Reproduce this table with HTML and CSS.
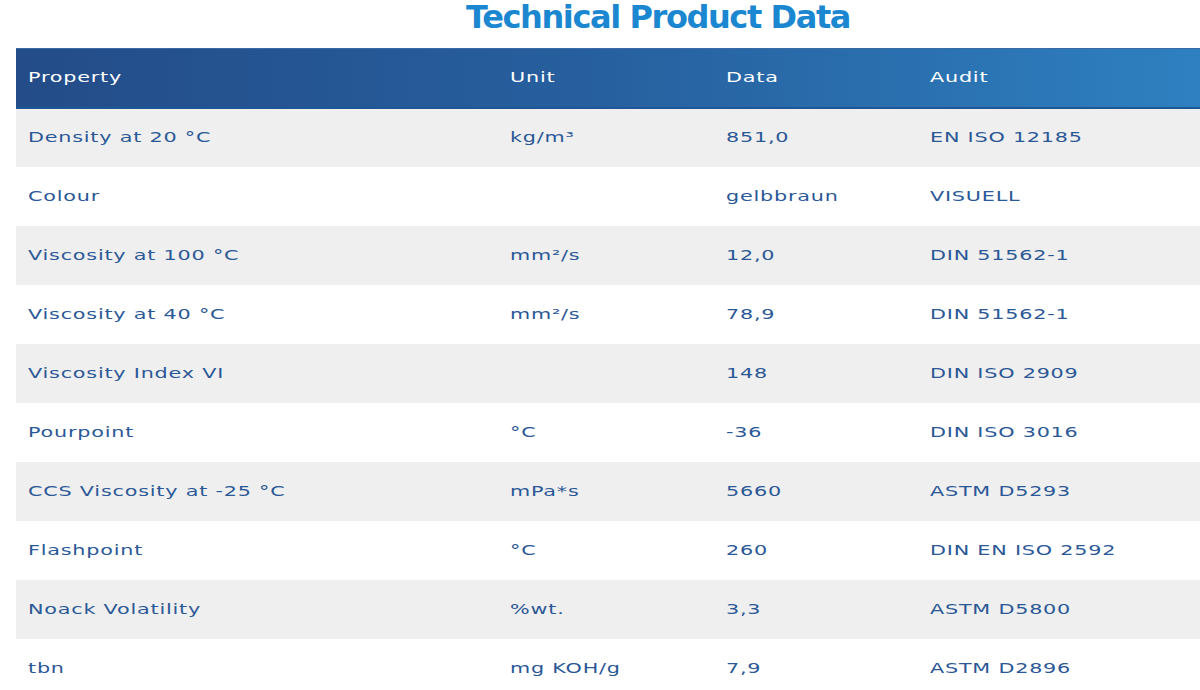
FILE: index.html
```html
<!DOCTYPE html>
<html lang="en">
<head>
<meta charset="utf-8">
<title>Technical Product Data</title>
<link rel="stylesheet" href="styles.css">
</head>
<body>
<h1 class="title">Technical Product Data</h1>
<table class="data">
  <thead>
    <tr><th class="c1"><span class="t">Property</span></th><th class="c2"><span class="t">Unit</span></th><th class="c3"><span class="t">Data</span></th><th class="c4"><span class="t">Audit</span></th></tr>
  </thead>
  <tbody>
    <tr><td><span class="t">Density at 20 °C</span></td><td><span class="t">kg/m³</span></td><td><span class="t">851,0</span></td><td><span class="t">EN ISO 12185</span></td></tr>
    <tr><td><span class="t">Colour</span></td><td></td><td><span class="t">gelbbraun</span></td><td><span class="t">VISUELL</span></td></tr>
    <tr><td><span class="t">Viscosity at 100 °C</span></td><td><span class="t">mm²/s</span></td><td><span class="t">12,0</span></td><td><span class="t">DIN 51562-1</span></td></tr>
    <tr><td><span class="t">Viscosity at 40 °C</span></td><td><span class="t">mm²/s</span></td><td><span class="t">78,9</span></td><td><span class="t">DIN 51562-1</span></td></tr>
    <tr><td><span class="t">Viscosity Index VI</span></td><td></td><td><span class="t">148</span></td><td><span class="t">DIN ISO 2909</span></td></tr>
    <tr><td><span class="t">Pourpoint</span></td><td><span class="t">°C</span></td><td><span class="t">-36</span></td><td><span class="t">DIN ISO 3016</span></td></tr>
    <tr><td><span class="t">CCS Viscosity at -25 °C</span></td><td><span class="t">mPa*s</span></td><td><span class="t">5660</span></td><td><span class="t">ASTM D5293</span></td></tr>
    <tr><td><span class="t">Flashpoint</span></td><td><span class="t">°C</span></td><td><span class="t">260</span></td><td><span class="t">DIN EN ISO 2592</span></td></tr>
    <tr><td><span class="t">Noack Volatility</span></td><td><span class="t">%wt.</span></td><td><span class="t">3,3</span></td><td><span class="t">ASTM D5800</span></td></tr>
    <tr><td><span class="t">tbn</span></td><td><span class="t">mg KOH/g</span></td><td><span class="t">7,9</span></td><td><span class="t">ASTM D2896</span></td></tr>
  </tbody>
</table>
</body>
</html>
```
FILE: styles.css
```css
html, body {
  margin: 0;
  padding: 0;
  background: #ffffff;
  overflow: hidden;
}
body {
  font-family: "DejaVu Sans", "Liberation Sans", sans-serif;
}
.title {
  margin: 0;
  height: 48px;
  padding-left: 466px;
  font-size: 32px;
  line-height: 34px;
  font-weight: bold;
  color: #1a87d0;
  letter-spacing: -1.4px;
}
.data {
  margin-left: 16px;
  width: 1184px;
  border-collapse: collapse;
  table-layout: fixed;
}
.t {
  display: inline-block;
  white-space: nowrap;
  transform: scaleX(1.44);
  transform-origin: 0 50%;
  letter-spacing: 0.55px;
}
.data th {
  height: 59px;
  padding: 0 0 2px 12px;
  text-align: left;
  font-weight: normal;
  color: #ffffff;
  font-size: 14.4px;
  box-sizing: border-box;
  border-top: 1px solid #3a6aa6;
}
.data thead tr {
  background: linear-gradient(to right, #234c88 0%, #27609f 50%, #2e80c0 100%);
  border-bottom: 2px solid #1d5796;
}
.c1 { width: 482px; }
.c2 { width: 216px; }
.c3 { width: 204px; }
.c4 { width: auto; }
.data td {
  height: 59px;
  box-sizing: border-box;
  padding: 0 0 1px 12px;
  color: #2b5896;
  font-size: 14.4px;
  white-space: nowrap;
}
.data tbody tr:first-child td {
  border-top: 1px solid #b9d3ec;
}
.data tbody tr:nth-child(odd) { background: #efefef; }
.data tbody tr:nth-child(even) { background: #ffffff; }
```
